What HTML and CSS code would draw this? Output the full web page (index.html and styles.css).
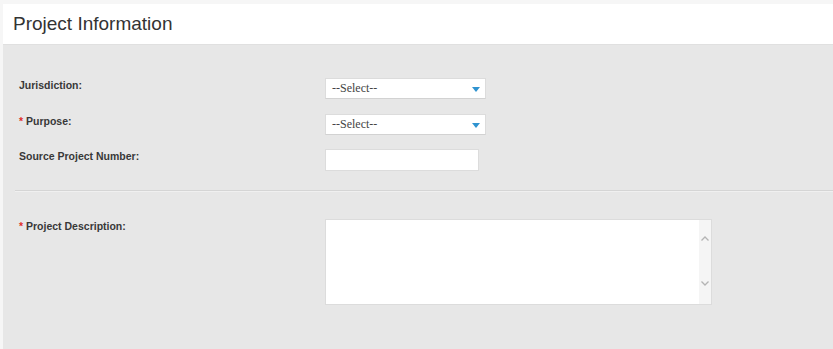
FILE: index.html
```html
<!DOCTYPE html>
<html lang="en">
<head>
  <meta charset="UTF-8" />
  <meta name="viewport" content="width=device-width, initial-scale=1.0"/>
  <title>Project Information</title>
  <link rel="stylesheet" href="styles.css">
</head>
<body>

  <section class="panel">
    <header class="panel-header">
      <h2>Project Information</h2>
    </header>

    <div class="panel-body">
      <div class="form-row">
        <label class="field-label">Jurisdiction:</label>
        <div class="select">
          <span>--Select--</span>
          <svg class="caret" width="8" height="5" viewBox="0 0 8 5"><path d="M0 0h8L4 5z" fill="#2f93d0"/></svg>
        </div>
      </div>

      <div class="form-row">
        <label class="field-label"><span class="req">*</span> Purpose:</label>
        <div class="select">
          <span>--Select--</span>
          <svg class="caret" width="8" height="5" viewBox="0 0 8 5"><path d="M0 0h8L4 5z" fill="#2f93d0"/></svg>
        </div>
      </div>

      <div class="form-row">
        <label class="field-label">Source Project Number:</label>
        <div class="text-input"></div>
      </div>

      <hr class="divider">

      <div class="form-row">
        <label class="field-label"><span class="req">*</span> Project Description:</label>
        <div class="textarea">
          <div class="textarea-content"></div>
          <div class="scrollbar">
            <svg width="8" height="5" viewBox="0 0 8 5"><path d="M0.5 4.5L4 1l3.5 3.5" fill="none" stroke="#b4b4b4" stroke-width="1.3"/></svg>
            <svg width="8" height="5" viewBox="0 0 8 5"><path d="M0.5 0.5L4 4l3.5-3.5" fill="none" stroke="#b4b4b4" stroke-width="1.3"/></svg>
          </div>
        </div>
      </div>
    </div>
  </section>

</body>
</html>
```

FILE: styles.css
```css
* {
  box-sizing: border-box;
}

body {
  margin: 0;
  padding: 0;
  background: #f6f6f6;
  font-family: "Liberation Sans", Arial, sans-serif;
  color: #333;
}

.panel {
  margin: 4px 0 4px 3px;
}

.panel-header {
  background: #fff;
  height: 41px;
  border-bottom: 1px solid #e0e0e0;
  display: flex;
  align-items: center;
  padding-left: 10px;
}

.panel-header h2 {
  margin: 0;
  font-size: 19px;
  font-weight: normal;
  color: #333;
}

.panel-body {
  background: #e7e7e7;
  padding: 33px 0 40px 16px;
}

.form-row {
  display: flex;
  align-items: flex-start;
  margin-bottom: 15px;
}

.form-row:nth-child(2) {
  margin-bottom: 14px;
}

.field-label {
  width: 306px;
  font-size: 10.5px;
  font-weight: bold;
  line-height: 12px;
  color: #383838;
  padding-top: 1px;
}

.req {
  color: #e0302a;
}

.select {
  width: 161px;
  height: 21px;
  background: #fff;
  border: 1px solid #dcdcdc;
  border-bottom-color: #d2d2d2;
  display: flex;
  align-items: center;
  justify-content: space-between;
  padding: 0 5px 0 6px;
  font-family: "Liberation Serif", "Times New Roman", serif;
  font-size: 12px;
  color: #444;
}

.caret {
  margin-top: 1px;
}

.text-input {
  width: 154px;
  height: 22px;
  background: #fff;
  border: 1px solid #dcdcdc;
}

.divider {
  border: 0;
  border-top: 1px solid #d5d5d5;
  border-bottom: 1px solid #f0f0f0;
  margin: 19px 0 27px -4px;
}

.textarea {
  width: 387px;
  height: 86px;
  background: #fff;
  border: 1px solid #dcdcdc;
  display: flex;
}

.textarea-content {
  flex: 1;
}

.scrollbar {
  width: 12px;
  background: #f5f5f5;
  display: flex;
  flex-direction: column;
  align-items: center;
  justify-content: space-between;
  padding: 16px 0 18px 0;
}
```
